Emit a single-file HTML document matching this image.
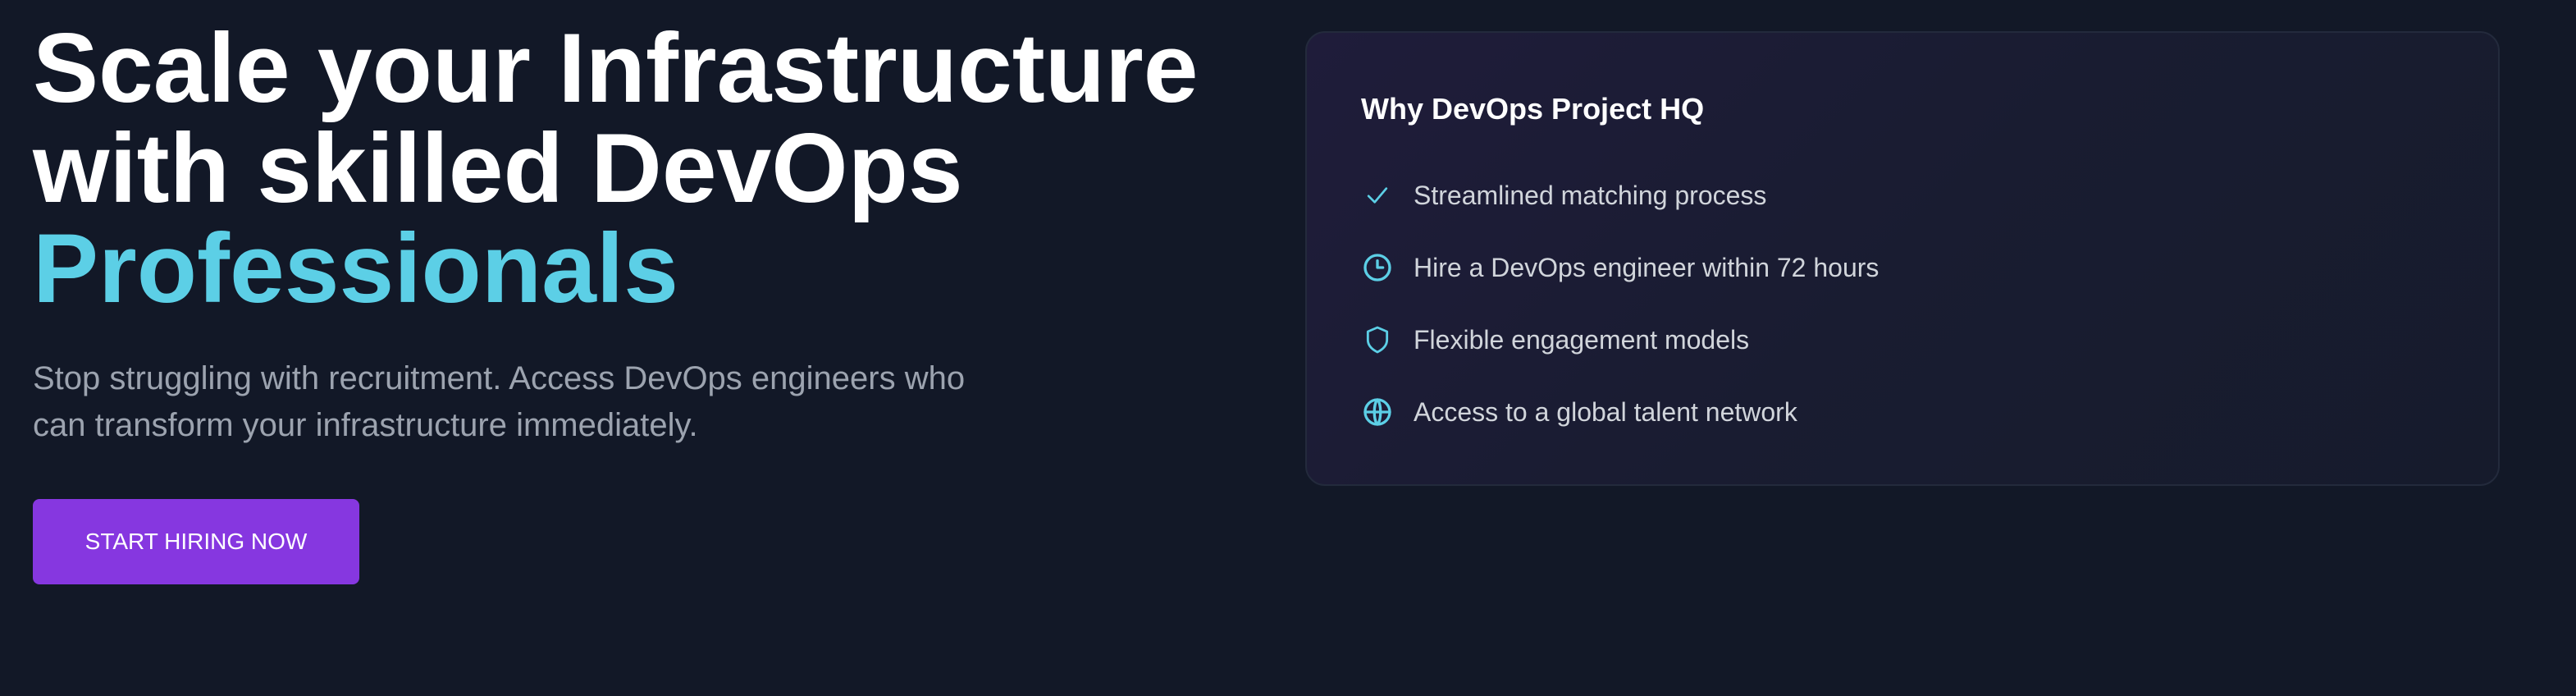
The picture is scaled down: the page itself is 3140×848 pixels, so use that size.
<!DOCTYPE html>
<html><head><meta charset="utf-8"><style>
*{margin:0;padding:0;box-sizing:border-box}
html,body{width:3140px;height:848px;background:#121827;overflow:hidden;font-family:"Liberation Sans",Arial,sans-serif}
h1{position:absolute;left:40px;top:22px;font-size:120px;line-height:122px;font-weight:700;color:#fff;letter-spacing:0;white-space:nowrap}
h1 span{color:#5ccfe6}
p.lead{position:absolute;left:40px;top:433px;width:1200px;font-size:40px;line-height:57px;color:#9ca3af}
.btn{position:absolute;left:40px;top:608px;width:398px;height:104px;border-radius:8px;background:#8637e0;color:#fff;font-size:28px;display:flex;align-items:center;justify-content:center}
.card{position:absolute;left:1591px;top:38px;width:1456px;height:554px;border-radius:24px;border:2px solid #232a3c;background:linear-gradient(135deg,#1f1c3a 0%,#191c31 50%,#161b2c 100%)}
.card h2{position:absolute;left:66px;top:73px;font-size:36px;line-height:40px;color:#fff;font-weight:700}
.item{position:absolute;left:66px;height:40px;display:flex;align-items:center}
.item svg{width:40px;height:40px;flex:none}
.item span{margin-left:24px;font-size:32px;color:#d1d5db;white-space:nowrap}
</style></head><body>
<h1>Scale your Infrastructure<br>with skilled DevOps<br><span>Professionals</span></h1>
<p class="lead">Stop struggling with recruitment. Access DevOps engineers who can transform your infrastructure immediately.</p>
<div class="btn">START HIRING NOW</div>
<div class="card">
<h2>Why DevOps Project HQ</h2>
<div class="item" style="top:178px"><svg viewBox="0 0 24 24" fill="none" stroke="#5ccfe6" stroke-width="1.6" stroke-linecap="round" stroke-linejoin="round"><path d="M5.5 12.5l4.5 4.5 8.5-10"/></svg><span>Streamlined matching process</span></div>
<div class="item" style="top:266px"><svg viewBox="0 0 24 24" fill="none" stroke="#5ccfe6" stroke-width="2" stroke-linecap="round" stroke-linejoin="round"><circle cx="12" cy="12" r="9"/><path d="M12 7v5h4"/></svg><span>Hire a DevOps engineer within 72 hours</span></div>
<div class="item" style="top:354px"><svg viewBox="0 0 24 24" fill="none" stroke="#5ccfe6" stroke-width="1.7" stroke-linecap="round" stroke-linejoin="round"><path d="M12 3l7 3v6c0 4-3 7-7 9-4-2-7-5-7-9V6z"/></svg><span>Flexible engagement models</span></div>
<div class="item" style="top:442px"><svg viewBox="0 0 24 24" fill="none" stroke="#5ccfe6" stroke-width="2" stroke-linecap="round" stroke-linejoin="round"><circle cx="12" cy="12" r="9"/><path d="M3 12h18M12 3c-3 3-3 15 0 18M12 3c3 3 3 15 0 18"/></svg><span>Access to a global talent network</span></div>
</div>
</body></html>
